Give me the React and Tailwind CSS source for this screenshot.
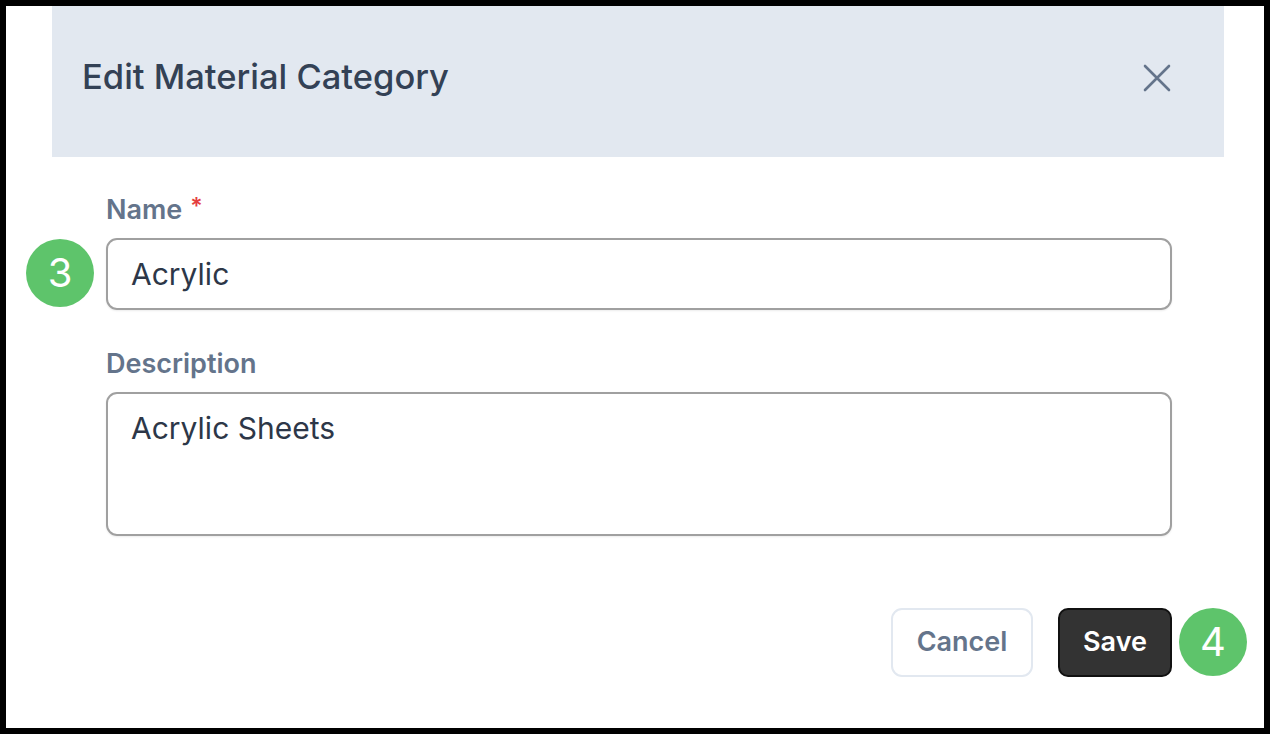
import React from "react";

function Badge({ n, className }) {
  return (
    <div
      className={
        "absolute flex h-[68px] w-[68px] items-center justify-center rounded-full bg-[#5ec46b] text-[40px] leading-none text-white " +
        className
      }
      style={{ fontFamily: "Inter, 'Noto Sans', sans-serif" }}
    >
      {n}
    </div>
  );
}

export default function App() {
  return (
    <div
      className="h-[734px] w-[1270px] bg-black p-[6px] pb-[6px]"
      style={{ fontFamily: "Inter, 'Noto Sans', sans-serif" }}
    >
      <div className="relative flex h-full w-full flex-col bg-white">
        <div className="ml-[46px] flex h-[151px] w-[1172px] items-center justify-between bg-[#e2e8f0] pb-[8px] pl-[30px] pr-[53px]">
          <h1 className="text-[34.5px] font-medium leading-none text-[#334155]">
            Edit Material Category
          </h1>
          <svg width="28" height="28" viewBox="0 0 28 28" className="mt-[1px]">
            <path
              d="M2 2 L26 26 M26 2 L2 26"
              stroke="#64748b"
              strokeWidth="2.6"
              strokeLinecap="round"
              fill="none"
            />
          </svg>
        </div>

        <div className="ml-[100px] flex w-[1066px] flex-col">
          <label className="mt-[34px] flex h-[39px] items-center gap-[8px] text-[27px] font-semibold text-[#64748b]">
            <span>Name</span>
            <span className="-mt-[8px] text-[23px] text-[#e53e3e]">*</span>
          </label>
          <div className="relative mt-[8px]">
            <Badge n="3" className="left-[-80px] top-[1px]" />
            <input
              readOnly
              value="Acrylic"
              className="h-[72px] w-full rounded-[11px] border-2 border-[#a0a0a0] px-[23px] text-[30px] text-[#2d3748] shadow-[0_1px_2px_rgba(0,0,0,0.08)] outline-none"
            />
          </div>

          <label className="mt-[35px] flex h-[39px] items-center text-[27px] font-semibold text-[#64748b]">
            Description
          </label>
          <textarea
            readOnly
            value="Acrylic Sheets"
            className="mt-[8px] h-[144px] w-full resize-none rounded-[11px] border-2 border-[#a0a0a0] px-[23px] pt-[12px] text-[30px] leading-[45px] text-[#2d3748] shadow-[0_1px_2px_rgba(0,0,0,0.08)] outline-none"
          />

          <div className="relative mt-[72px] flex justify-end gap-[25px]">
            <button className="flex h-[69px] w-[142px] items-center justify-center rounded-[11px] border-2 border-[#e2e8f0] bg-white text-[27px] font-semibold text-[#64748b]">
              Cancel
            </button>
            <button className="flex h-[69px] w-[114px] items-center justify-center rounded-[10px] border-2 border-[#111111] bg-[#333333] text-[27px] font-semibold text-white">
              Save
            </button>
            <Badge n="4" className="right-[-75px] top-0" />
          </div>
        </div>
      </div>
    </div>
  );
}
